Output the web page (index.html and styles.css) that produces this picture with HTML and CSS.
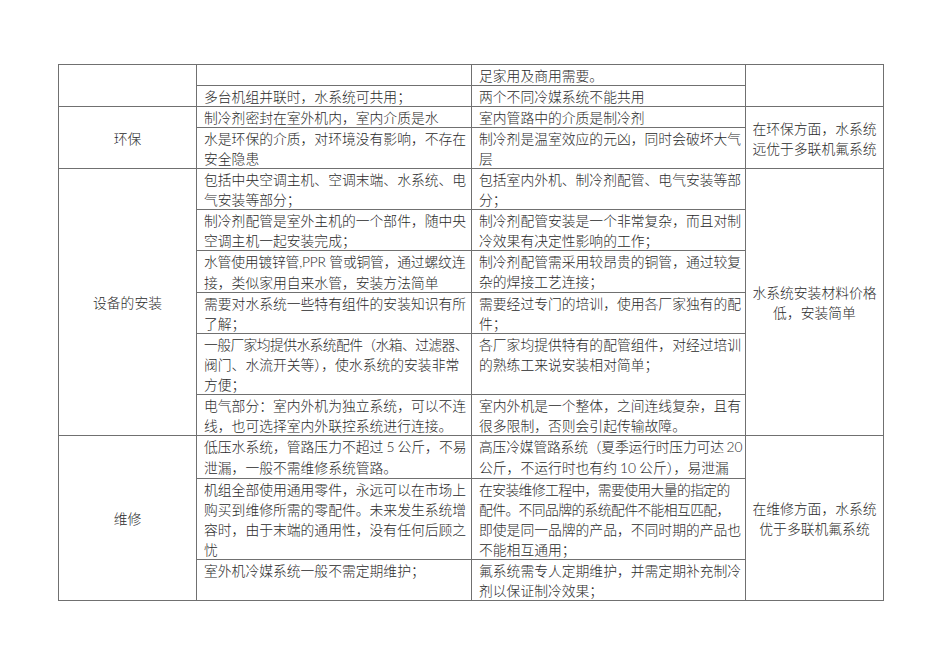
FILE: index.html
```html
<!DOCTYPE html>
<html lang="zh-CN">
<head>
<meta charset="utf-8">
<title>水系统与多联机对比</title>
<link rel="stylesheet" href="styles.css">
</head>
<body>
<table class="cmp">
  <colgroup>
    <col class="c-cat"><col class="c-txt"><col class="c-txt2"><col class="c-sum">
  </colgroup>
  <tr>
    <td class="cat" rowspan="2"></td>
    <td class="txt"></td>
    <td class="txt">足家用及商用需要。</td>
    <td class="sum" rowspan="2"></td>
  </tr>
  <tr>
    <td class="txt">多台机组并联时，水系统可共用；</td>
    <td class="txt">两个不同冷媒系统不能共用</td>
  </tr>
  <tr>
    <td class="cat" rowspan="2">环保</td>
    <td class="txt">制冷剂密封在室外机内，室内介质是水</td>
    <td class="txt">室内管路中的介质是制冷剂</td>
    <td class="sum" rowspan="2">在环保方面，水系统<br>远优于多联机氟系统</td>
  </tr>
  <tr>
    <td class="txt">水是环保的介质，对环境没有影响，不存在<br>安全隐患</td>
    <td class="txt">制冷剂是温室效应的元凶，同时会破坏大气<br>层</td>
  </tr>
  <tr>
    <td class="cat" rowspan="6">设备的安装</td>
    <td class="txt">包括中央空调主机、空调末端、水系统、电<br>气安装等部分；</td>
    <td class="txt">包括室内外机、制冷剂配管、电气安装等部<br>分；</td>
    <td class="sum" rowspan="6">水系统安装材料价格<br>低，安装简单</td>
  </tr>
  <tr>
    <td class="txt">制冷剂配管是室外主机的一个部件，随中央<br>空调主机一起安装完成；</td>
    <td class="txt">制冷剂配管安装是一个非常复杂，而且对制<br>冷效果有决定性影响的工作；</td>
  </tr>
  <tr>
    <td class="txt"><span class="tight2">水管使用镀锌管<span class="lat">,PPR </span>管或铜管，通过螺纹连</span><br>接，类似家用自来水管，安装方法简单</td>
    <td class="txt">制冷剂配管需采用较昂贵的铜管，通过较复<br>杂的焊接工艺连接；</td>
  </tr>
  <tr>
    <td class="txt">需要对水系统一些特有组件的安装知识有所<br>了解；</td>
    <td class="txt">需要经过专门的培训，使用各厂家独有的配<br>件；</td>
  </tr>
  <tr>
    <td class="txt"><span class="tight">一般厂家均提供水系统配件（水箱、过滤器、</span><br>阀门、水流开关等），使水系统的安装非常<br>方便；</td>
    <td class="txt">各厂家均提供特有的配管组件，对经过培训<br>的熟练工来说安装相对简单；</td>
  </tr>
  <tr>
    <td class="txt">电气部分：室内外机为独立系统，可以不连<br>线，也可选择室内外联控系统进行连接。</td>
    <td class="txt">室内外机是一个整体，之间连线复杂，且有<br>很多限制，否则会引起传输故障。</td>
  </tr>
  <tr>
    <td class="cat" rowspan="3">维修</td>
    <td class="txt">低压水系统，管路压力不超过 <span class="lat">5</span> 公斤，不易<br>泄漏，一般不需维修系统管路。</td>
    <td class="txt"><span class="tight2">高压冷媒管路系统（夏季运行时压力可达 <span class="lat">20</span></span><br>公斤，不运行时也有约 <span class="lat">10</span> 公斤），易泄漏</td>
    <td class="sum" rowspan="3">在维修方面，水系统<br>优于多联机氟系统</td>
  </tr>
  <tr>
    <td class="txt">机组全部使用通用零件，永远可以在市场上<br>购买到维修所需的零配件。未来发生系统增<br>容时，由于末端的通用性，没有任何后顾之<br>忧</td>
    <td class="txt"><span class="tight">在安装维修工程中，需要使用大量的指定的</span><br><span class="tight">配件。不同品牌的系统配件不能相互匹配，</span><br>即使是同一品牌的产品，不同时期的产品也<br>不能相互通用；</td>
  </tr>
  <tr>
    <td class="txt">室外机冷媒系统一般不需定期维护；</td>
    <td class="txt">氟系统需专人定期维护，并需定期补充制冷<br>剂以保证制冷效果；</td>
  </tr>
</table>
</body>
</html>
```

FILE: styles.css
```css
html, body {
  margin: 0;
  padding: 0;
  background: #ffffff;
}

body {
  padding: 64px 0 0 58px;
  font-family: "Noto Sans CJK SC", "Liberation Sans", sans-serif;
  font-size: 13.8px;
  font-weight: 300;
  line-height: 20px;
  color: #2a2a2a;
}

.cmp {
  border-collapse: collapse;
  table-layout: fixed;
  width: 826px;
}

.c-cat { width: 138px; }
.c-txt { width: 275px; }
.c-txt2 { width: 274px; }
.c-sum { width: 138px; }

.cmp td {
  border: 1px solid #707070;
  padding: 0;
  height: 20px;
  vertical-align: top;
}

.cat {
  text-align: center;
  vertical-align: middle !important;
}

.txt {
  padding: 0 1px 0 7px !important;
  white-space: nowrap;
  overflow: hidden;
}

.sum {
  text-align: center;
  vertical-align: middle !important;
  white-space: nowrap;
}

.lat {
  font-family: "Lato", "Liberation Sans", sans-serif;
}

.tight {
  letter-spacing: -0.6px;
}

.tight2 {
  letter-spacing: -0.2px;
}
```
